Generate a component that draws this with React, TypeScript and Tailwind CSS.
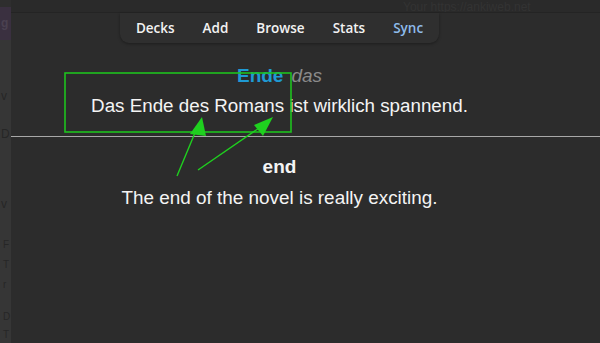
import React from 'react';

const menuItems = ['Decks', 'Add', 'Browse', 'Stats', 'Sync'];

// Green annotation arrows drawn over the card
const Annotation: React.FC = () => (
  <svg className="absolute left-0 top-0 pointer-events-none" width="600" height="343" viewBox="0 0 600 343">
    <rect x="65" y="73" width="226" height="59" fill="none" stroke="#1fc21f" strokeWidth="1.6" />
    <line x1="177" y1="176" x2="197" y2="128" stroke="#1fd01f" strokeWidth="1.4" />
    <polygon points="202,117 190,134 206,136" fill="#1fd01f" />
    <line x1="198" y1="170" x2="262" y2="126" stroke="#1fd01f" strokeWidth="1.4" />
    <polygon points="273,117 254,125 263,136" fill="#1fd01f" />
  </svg>
);

const App: React.FC = () => {
  return (
    <div className="relative w-[600px] h-[343px] overflow-hidden bg-[#2c2c2c] flex" style={{ fontFamily: '"Liberation Sans", Arial, sans-serif' }}>
      {/* Desktop strip on the left, behind the window */}
      <div className="w-[11px] shrink-0 bg-[#363636] flex flex-col text-[#262626] text-[12px] leading-none overflow-hidden">
        <div className="h-[7px] bg-[#2e2e2e]" />
        <div className="h-[33px] bg-[#3a3040] text-[#4a4150] font-bold pt-[10px] pl-[1px] text-[12px]">g</div>
        <div className="mt-[50px] pl-[1px]">v</div>
        <div className="mt-[26px] pl-[1px]">D</div>
        <div className="mt-[58px] pl-[1px]">v</div>
        <div className="mt-[30px] pl-[3px] text-[10px]">F</div>
        <div className="mt-[10px] pl-[3px] text-[10px]">T</div>
        <div className="mt-[10px] pl-[3px] text-[10px]">r</div>
        <div className="mt-[22px] pl-[3px] text-[10px]">D</div>
        <div className="mt-[8px] pl-[3px] text-[10px]">T</div>
      </div>

      <div className="flex-1 flex flex-col">
        {/* Strip of the window above */}
        <div className="h-[13px] shrink-0 bg-[#2a2a2a] border-b border-[#242424] flex items-end overflow-hidden">
          <span className="ml-[392px] text-[12px] leading-[10px] text-[#333333] whitespace-nowrap">Your https://ankiweb.net</span>
        </div>

        <div className="w-[537px] flex flex-col items-center">
          {/* Top menu */}
          <nav
            className="flex items-center gap-[28px] h-[30px] px-[16px] bg-[#2f2f2f] rounded-b-[9px] shadow-[0_1px_3px_rgba(0,0,0,0.35)] text-[13.5px] font-semibold"
            style={{ fontFamily: '"Open Sans", "Noto Sans", sans-serif' }}
          >
            {menuItems.map(item => (
              <span key={item} className={item === 'Sync' ? 'text-[#8ebbeb]' : 'text-[#f2f2f2]'}>
                {item}
              </span>
            ))}
          </nav>

          {/* Front of the card */}
          <div className="mt-[23px] flex items-baseline gap-[8px] leading-[20px]">
            <span className="text-[19px] font-bold text-[#1f9ad4]">Ende</span>
            <span className="text-[19px] italic text-[#8a8a8a]">das</span>
          </div>
          <div className="mt-[10px] text-[18.8px] leading-[20px] text-[#f4f4f4] whitespace-nowrap">
            Das Ende des Romans ist wirklich spannend.
          </div>
        </div>

        <div className="mt-[20px] h-[1px] bg-[#a8a8a8] w-full" />

        {/* Back of the card */}
        <div className="w-[537px] flex flex-col items-center">
          <div className="mt-[20px] text-[19px] leading-[20px] font-bold text-[#f4f4f4]">end</div>
          <div className="mt-[11px] text-[18.9px] leading-[20px] text-[#f4f4f4] whitespace-nowrap">
            The end of the novel is really exciting.
          </div>
        </div>
      </div>

      <Annotation />
    </div>
  );
};

export default App;
